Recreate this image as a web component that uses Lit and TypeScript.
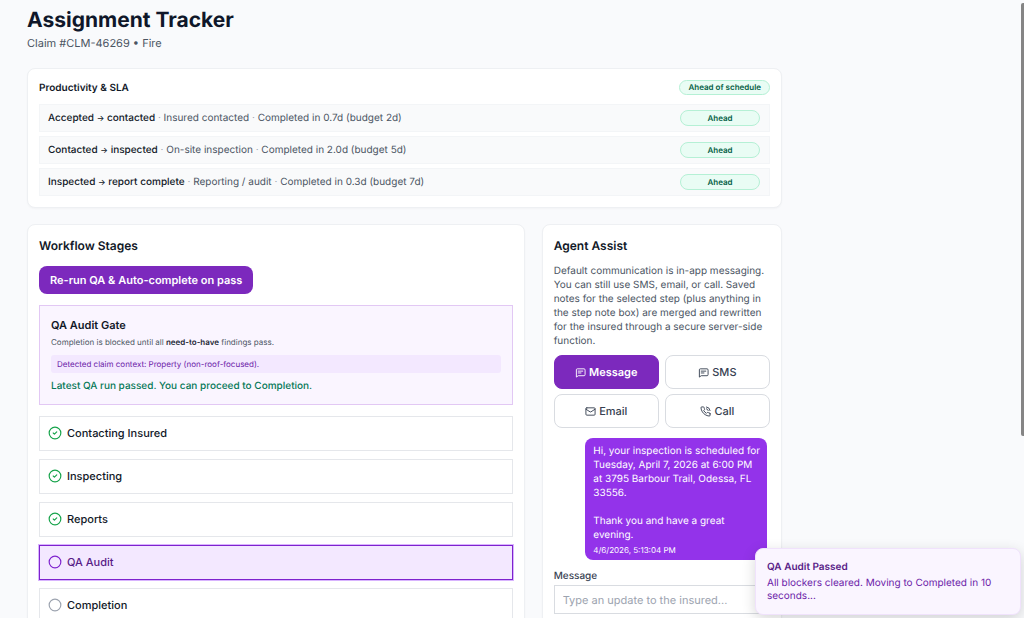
import { LitElement, html, css, svg } from "lit";
import { customElement, state } from "lit/decorators.js";
import { classMap } from "lit/directives/class-map.js";

const messageIcon = svg`<path d="M22 17a2 2 0 0 1-2 2H7l-4 3V6a2 2 0 0 1 2-2h15a2 2 0 0 1 2 2z"/><path d="M17 9H7M13 13H7"/>`;
const mailIcon = svg`<rect x="2" y="4" width="20" height="16" rx="2"/><path d="m22 7-8.97 5.7a1.94 1.94 0 0 1-2.06 0L2 7"/>`;
const callIcon = svg`<path d="M22 16.92v3a2 2 0 0 1-2.18 2 19.79 19.79 0 0 1-8.63-3.07 19.5 19.5 0 0 1-6-6 19.79 19.79 0 0 1-3.07-8.67A2 2 0 0 1 4.11 2h3a2 2 0 0 1 2 1.72 12.84 12.84 0 0 0 .7 2.81 2 2 0 0 1-.45 2.11L8.09 9.91a16 16 0 0 0 6 6l1.27-1.27a2 2 0 0 1 2.11-.45 12.84 12.84 0 0 0 2.81.7A2 2 0 0 1 22 16.92z"/><path d="M14.05 2a9 9 0 0 1 8 7.94M14.05 6A5 5 0 0 1 18 10"/>`;

@customElement("app-root")
export class AppRoot extends LitElement {
  @state() private channel = "Message";
  @state() private stage = "QA Audit";

  private sla = [
    { from: "Accepted", to: "contacted", what: "Insured contacted", result: "Completed in 0.7d (budget 2d)" },
    { from: "Contacted", to: "inspected", what: "On-site inspection", result: "Completed in 2.0d (budget 5d)" },
    { from: "Inspected", to: "report complete", what: "Reporting / audit", result: "Completed in 0.3d (budget 7d)" },
  ];

  private stages = [
    { name: "Contacting Insured", done: true },
    { name: "Inspecting", done: true },
    { name: "Reports", done: true },
    { name: "QA Audit", done: false },
    { name: "Completion", done: false },
  ];

  private channels = [
    { name: "Message", icon: messageIcon },
    { name: "SMS", icon: messageIcon },
    { name: "Email", icon: mailIcon },
    { name: "Call", icon: callIcon },
  ];

  static styles = css`
    :host {
      display: block;
      position: relative;
      height: 100vh;
      overflow: hidden;
      background: #f9fafc;
      color: #111827;
      font-family: Inter, "Liberation Sans", sans-serif;
      font-size: 10px;
      line-height: 14px;
      text-rendering: geometricPrecision;
    }
    * { box-sizing: border-box; }
    h1, h2, h3, p, ul { margin: 0; padding: 0; }
    ul { list-style: none; }
    button { font-family: inherit; cursor: pointer; text-rendering: inherit; }
    svg { fill: none; stroke: currentColor; stroke-width: 2; stroke-linecap: round; stroke-linejoin: round; flex: none; }

    .page { max-width: 809px; padding: 7px 27px 0; }
    h1 { font-size: 21px; line-height: 28px; font-weight: 700; color: #0f172a; }
    .claim { font-size: 11px; line-height: 16px; color: #4b5563; }
    .card {
      background: #fff;
      border: 1px solid #eef0f3;
      border-radius: 8px;
      box-shadow: 0 1px 2px rgba(15, 23, 42, 0.03);
      padding: 11px;
    }
    .productivity { margin-top: 17px; }
    .head { display: flex; justify-content: space-between; align-items: center; height: 15px; }
    .head h2 { font-size: 10px; font-weight: 600; line-height: 14px; }
    .pill {
      border: 1px solid #b5f0d5;
      border-radius: 8px;
      background: #e9fcf4;
      color: #065f46;
      font-size: 8px;
      line-height: 13px;
      font-weight: 600;
      padding: 0 8px;
      text-align: center;
    }
    .rows { display: grid; gap: 4px; margin-top: 9px; }
    .row {
      display: flex;
      align-items: center;
      justify-content: space-between;
      height: 28px;
      padding: 0 9px 0 8px;
      border: 1px solid #f3f5f7;
      background: #f9fafb;
    }
    .row .pill { width: 80px; line-height: 14px; }
    .row strong { font-weight: 500; }
    .row .arrow { font-size: 8px; color: inherit; }
    .row span { color: #4b5563; }
    .row i { color: #9ca3af; font-style: normal; }

    .columns { display: grid; grid-template-columns: minmax(0, 497fr) minmax(0, 240fr); gap: 17px; margin-top: 16px; align-items: start; }
    .columns .card { padding: 12px 11px; min-height: 500px; }
    .columns h2 { font-size: 12px; line-height: 18px; font-weight: 600; }
    .rerun {
      display: block;
      margin-top: 11px;
      height: 28px;
      padding: 0 11px;
      border: 0;
      border-radius: 8px;
      background: #7c29bd;
      color: #fff;
      font-size: 11px;
      font-weight: 600;
    }
    .gate {
      margin-top: 11px;
      padding: 11px;
      border: 1px solid #e2c8f4;
      background: #faf5ff;
    }
    .gate h3 { font-size: 11px; line-height: 16px; font-weight: 600; }
    .gate .note { font-size: 8px; line-height: 12px; margin-top: 3px; color: #4b5563; }
    .gate .note strong { font-weight: 600; color: #1f2937; }
    .context {
      margin-top: 7px;
      padding: 0 6px;
      border-radius: 3px;
      background: #f3e8ff;
      color: #6b21a8;
      font-size: 8px;
      line-height: 18px;
    }
    .passed { margin-top: 6px; color: #047857; font-weight: 500; }
    .stages { display: grid; gap: 8px; margin-top: 11px; }
    .stage {
      display: flex;
      align-items: center;
      gap: 5px;
      width: 100%;
      height: 35px;
      padding: 0 8px 1px;
      border: 1px solid #e5e7eb;
      background: #fff;
      color: #111827;
      font-size: 11px;
      font-weight: 500;
    }
    .stage svg { color: #9ca3af; }
    .stage.done svg { color: #16a34a; }
    .stage.active { background: #f3e8ff; border-color: #7e22ce; color: #581c87; box-shadow: 0 0 0 1px #d8b4fe; }
    .stage.active svg { color: #7e22ce; }

    .intro { margin-top: 9px; color: #4b5563; }
    .channels { display: grid; grid-template-columns: 1fr 1fr; gap: 5px 6px; margin-top: 7px; }
    .channel {
      display: flex;
      align-items: center;
      justify-content: center;
      gap: 3px;
      height: 34px;
      border: 1px solid #d9dce1;
      border-radius: 8px;
      background: #fff;
      color: #374151;
      font-size: 11px;
      font-weight: 500;
    }
    .channel.active { background: #7c29bd; border-color: #7c29bd; color: #fff; font-weight: 600; }
    .bubble {
      width: fit-content;
      max-width: 84%;
      margin: 10px 3px 0 auto;
      padding: 6px 6px 4px 8px;
      border-radius: 8px;
      background: #9333ea;
      color: #fff;
    }
    .bubble p + p { margin-top: 14px; }
    .bubble time { display: block; font-size: 8px; line-height: 12px; margin-top: 2px; }
    label { display: block; margin-top: 9px; font-weight: 500; color: #374151; }
    input {
      display: block;
      width: 100%;
      height: 29px;
      margin-top: 2px;
      padding: 0 8px;
      border: 1px solid #d9dce1;
      font: 11px Inter, sans-serif;
      text-rendering: inherit;
    }
    input::placeholder { color: #9ca3af; opacity: 1; }

    .toast {
      position: absolute;
      right: 3px;
      bottom: 3px;
      width: 266px;
      padding: 11px;
      border: 1px solid #f0e2fc;
      border-radius: 8px;
      background: #faf5ff;
      color: #6b21a8;
      box-shadow: 0 4px 14px rgba(0, 0, 0, 0.16);
    }
    .toast h3 { font-size: 10px; line-height: 14px; font-weight: 600; color: #581c87; }
    .toast p { margin-top: 3px; line-height: 13px; }
    .thumb { position: absolute; right: 0; top: 3px; width: 3px; height: 70%; border-radius: 2px 0 0 2px; background: #858585; }
  `;

  private icon(shape: unknown, size: number) {
    return html`<svg width=${size} height=${size} viewBox="0 0 24 24" aria-hidden="true">${shape}</svg>`;
  }

  render() {
    return html`
      <main class="page">
        <h1>Assignment Tracker</h1>
        <p class="claim">Claim #CLM-46269 • Fire</p>

        <section class="card productivity">
          <div class="head"><h2>Productivity &amp; SLA</h2><span class="pill">Ahead of schedule</span></div>
          <ul class="rows">
            ${this.sla.map((r) => html`
              <li class="row">
                <div><strong>${r.from} <span class="arrow">→</span> ${r.to}</strong> <i>·</i> <span>${r.what}</span> <i>·</i> <span>${r.result}</span></div>
                <div class="pill">Ahead</div>
              </li>`)}
          </ul>
        </section>

        <div class="columns">
          <section class="card">
            <h2>Workflow Stages</h2>
            <button class="rerun">Re-run QA &amp; Auto-complete on pass</button>
            <div class="gate">
              <h3>QA Audit Gate</h3>
              <p class="note">Completion is blocked until all <strong>need-to-have</strong> findings pass.</p>
              <p class="context">Detected claim context: Property (non-roof-focused).</p>
              <p class="passed">Latest QA run passed. You can proceed to Completion.</p>
            </div>
            <div class="stages">
              ${this.stages.map((s) => html`
                <button
                  class=${classMap({ stage: true, done: s.done, active: s.name === this.stage })}
                  @click=${() => (this.stage = s.name)}
                >
                  ${this.icon(svg`<circle cx="12" cy="12" r="10"/>${s.done ? svg`<path d="m9 12 2 2 4-4"/>` : ""}`, 14)}
                  ${s.name}
                </button>`)}
            </div>
          </section>

          <section class="card">
            <h2>Agent Assist</h2>
            <p class="intro">Default communication is in-app messaging. You can still use SMS, email, or call. Saved notes for the selected step (plus anything in the step note box) are merged and rewritten for the insured through a secure server-side function.</p>
            <div class="channels">
              ${this.channels.map((c) => html`
                <button
                  class=${classMap({ channel: true, active: c.name === this.channel })}
                  @click=${() => (this.channel = c.name)}
                >${this.icon(c.icon, 11)}${c.name}</button>`)}
            </div>
            <div class="bubble">
              <p>Hi, your inspection is scheduled for Tuesday, April 7, 2026 at 6:00 PM at 3795 Barbour Trail, Odessa, FL 33556.</p>
              <p>Thank you and have a great evening.</p>
              <time>4/6/2026, 5:13:04 PM</time>
            </div>
            <label for="update">Message</label>
            <input id="update" type="text" placeholder="Type an update to the insured..." />
          </section>
        </div>
      </main>
      <aside class="toast" role="status">
        <h3>QA Audit Passed</h3>
        <p>All blockers cleared. Moving to Completed in 10 seconds...</p>
      </aside>
      <div class="thumb"></div>
    `;
  }
}
